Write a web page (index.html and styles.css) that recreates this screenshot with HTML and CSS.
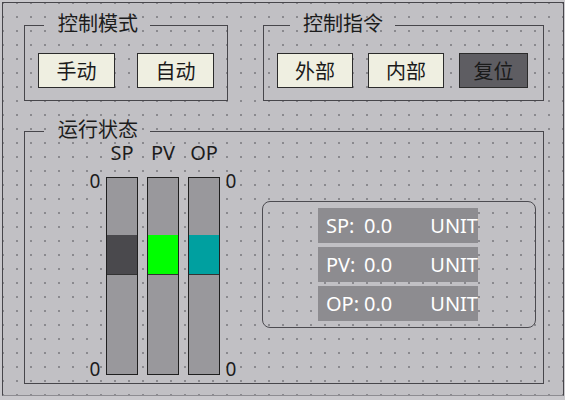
FILE: index.html
```html
<!DOCTYPE html>
<html lang="zh-CN">

<head>
  <meta charset="UTF-8">
  <meta name="viewport" content="width=device-width, initial-scale=1.0">
  <title>控制面板</title>
  <link rel="stylesheet" href="styles.css">
</head>

<body>
  <div class="screen">
    <div class="top-row">
      <fieldset class="group mode">
        <legend>控制模式</legend>
        <button class="btn">手动</button>
        <button class="btn">自动</button>
      </fieldset>

      <fieldset class="group command">
        <legend>控制指令</legend>
        <button class="btn">外部</button>
        <button class="btn">内部</button>
        <button class="btn dark">复位</button>
      </fieldset>
    </div>

    <fieldset class="group status">
      <legend>运行状态</legend>

      <div class="gauges">
        <div class="scale"><span>0</span><span>0</span></div>
        <div class="bars">
          <span class="bar-label">SP</span>
          <span class="bar-label">PV</span>
          <span class="bar-label">OP</span>
          <div class="bar"><div class="knob sp"></div></div>
          <div class="bar"><div class="knob pv"></div></div>
          <div class="bar"><div class="knob op"></div></div>
        </div>
        <div class="scale"><span>0</span><span>0</span></div>
      </div>

      <div class="readout">
        <div class="row"><span class="name">SP:</span><span class="value">0.0</span><span class="unit">UNIT</span></div>
        <div class="row"><span class="name">PV:</span><span class="value">0.0</span><span class="unit">UNIT</span></div>
        <div class="row"><span class="name">OP:</span><span class="value">0.0</span><span class="unit">UNIT</span></div>
      </div>
    </fieldset>
  </div>
</body>

</html>
```

FILE: styles.css
```css
body {
  background: #c9c8cc;
  color: #1c1c1c;
  font-family: "Noto Sans", "Noto Sans CJK SC", sans-serif;
  margin: 0;
}

.screen {
  background-color: #c1c0c4;
  background-image: radial-gradient(circle, #77767b 0 0.6px, transparent 1px);
  background-position: 7px 7px;
  background-size: 14px 14px;
  border: 1px solid #47464b;
  border-bottom-color: #8d8c91;
  box-sizing: border-box;
  height: 394px;
  margin: 2px 0 0 2px;
  padding: 8px 0 0 21px;
  width: 562px;
}

.top-row {
  display: flex;
  gap: 35px;
}

.group {
  border: 1px solid #47464b;
  box-sizing: border-box;
  display: flex;
  margin: 0;
  padding: 14px 13px 12px;

  legend {
    font: 20px/24px "Noto Sans CJK SC", sans-serif;
    margin-left: 6px;
    padding: 0 12px 4px 14px;
  }
}

.mode {
  gap: 22px;
  width: 204px;

  .btn {
    width: 77px;
  }
}

.command {
  gap: 15px;
  width: 281px;

  legend {
    margin-left: 13px;
    padding-left: 13px;
  }

  .btn {
    width: 76px;
  }

  .btn.dark {
    width: 69px;
  }
}

.btn {
  background: #efefe1;
  border: 1px solid #2b2b2b;
  border-radius: 0;
  box-sizing: border-box;
  color: #1a1a1a;
  font: 20px/33px "Noto Sans CJK SC", sans-serif;
  height: 35px;
  padding: 0;

  &.dark {
    background: #5e5d62;
  }
}

.status {
  align-items: flex-start;
  margin-top: 16px;
  padding: 0 7px 8px 13px;
  width: 520px;
}

.gauges {
  align-items: flex-end;
  display: flex;
  gap: 5px;
  margin-left: 51px;
}

.scale {
  display: flex;
  flex-direction: column;
  font-size: 19px;
  height: 202px;
  justify-content: space-between;
  line-height: 14px;
  margin-bottom: -1px;
  text-align: center;
  width: 12px;
}

.bars {
  column-gap: 9px;
  display: grid;
  grid-template-columns: repeat(3, 32px);
  grid-template-rows: 32px 198px;
}

.bar-label {
  font-size: 20px;
  line-height: 14px;
  padding-top: 1px;
  text-align: center;
}

.bar {
  background: #99989c;
  border: 1px solid #1f1f1f;
  box-sizing: border-box;
  padding-top: 57px;
}

.knob {
  border-bottom: 1px solid #333;
  height: 39px;

  &.sp {
    background: #4a494d;
  }

  &.pv {
    background: #00ff00;
  }

  &.op {
    background: #00a0a0;
  }
}

.readout {
  border: 1px solid #4c4b50;
  border-radius: 8px;
  box-sizing: border-box;
  display: flex;
  flex-direction: column;
  gap: 4px;
  height: 127px;
  margin-left: auto;
  margin-top: 56px;
  padding: 6px 0 6px 55px;
  width: 274px;
}

.row {
  background: #8d8c90;
  box-sizing: border-box;
  color: #fff;
  display: flex;
  font-size: 20px;
  height: 35px;
  line-height: 35px;
  padding-left: 8px;
  width: 160px;

  .name {
    width: 38px;
  }

  .unit {
    margin-left: auto;
  }
}
```
